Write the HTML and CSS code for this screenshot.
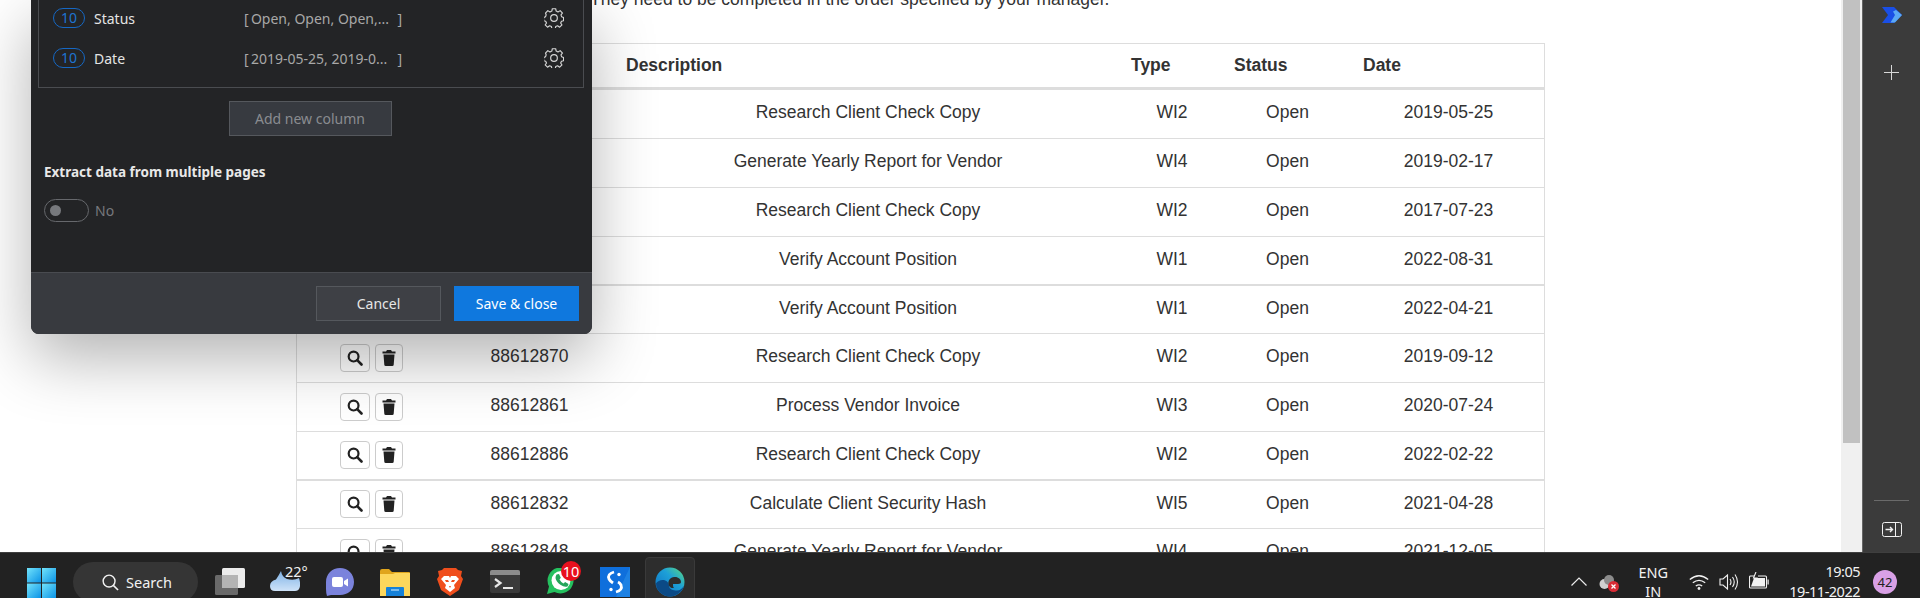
FILE: index.html
```html
<!DOCTYPE html>
<html lang="en">
<head>
<meta charset="utf-8">
<title>Work items</title>
<link rel="stylesheet" href="styles.css">
</head>
<body>
<svg class="defs" width="0" height="0" aria-hidden="true">
  <symbol id="gear" viewBox="0 0 24 24"><path fill="none" stroke="currentColor" stroke-width="1.400" stroke-linejoin="round" d="M10 1.500h4l.6 3 2.200 1 2.600-1.600 2.800 3-1.800 2.400.7 2.200 2.400 1v4l-2.500.6-1 2.200 1.600 2.500-2.800 2.800-2.500-1.700-2.200.9-.6 2.700h-4l-.6-2.700-2.200-.9-2.500 1.700-2.800-2.800 1.600-2.500-1-2.200-2.500-.6v-4l2.400-1 .7-2.200L1.800 6.900l2.800-3 2.600 1.600 2.200-1z" transform="translate(0 -.6) scale(1 .96)"/><circle cx="12" cy="12" r="4" fill="none" stroke="currentColor" stroke-width="1.400"/></symbol>
  <symbol id="search" viewBox="0 0 16 16"><circle cx="6.600" cy="6.600" r="4.900" fill="none" stroke="currentColor" stroke-width="2.200"/><path d="M10.200 10.200l4.300 4.300" stroke="currentColor" stroke-width="2.600" stroke-linecap="round"/></symbol>
  <symbol id="trash" viewBox="0 0 14 16"><path fill="currentColor" d="M5 0h4l1 1.500h3.500V3.500H.5V1.500H4zM1.500 4.500h11l-.8 10.200q-.1 1.300-1.400 1.300H3.700q-1.300 0-1.400-1.300z"/></symbol>
</svg>

<div class="screen">
  <div class="desktop">
    <main class="page">
      <p class="intro">They need to be completed in the order specified by your manager.</p>
      <table class="items">
        <thead>
          <tr><th class="c-act"></th><th class="c-id"></th><th class="c-desc">Description</th><th class="c-type">Type</th><th class="c-status">Status</th><th class="c-date">Date</th></tr>
        </thead>
        <tbody>
          <tr><td></td><td></td><td>Research Client Check Copy</td><td>WI2</td><td>Open</td><td>2019-05-25</td></tr>
          <tr><td></td><td></td><td>Generate Yearly Report for Vendor</td><td>WI4</td><td>Open</td><td>2019-02-17</td></tr>
          <tr><td></td><td></td><td>Research Client Check Copy</td><td>WI2</td><td>Open</td><td>2017-07-23</td></tr>
          <tr class="thick"><td></td><td></td><td>Verify Account Position</td><td>WI1</td><td>Open</td><td>2022-08-31</td></tr>
          <tr class="short"><td></td><td></td><td>Verify Account Position</td><td>WI1</td><td>Open</td><td>2022-04-21</td></tr>
          <tr><td><span class="tools"><button class="tool"><svg><use href="#search"/></svg></button><button class="tool"><svg class="bin"><use href="#trash"/></svg></button></span></td><td>88612870</td><td>Research Client Check Copy</td><td>WI2</td><td>Open</td><td>2019-09-12</td></tr>
          <tr><td><span class="tools"><button class="tool"><svg><use href="#search"/></svg></button><button class="tool"><svg class="bin"><use href="#trash"/></svg></button></span></td><td>88612861</td><td>Process Vendor Invoice</td><td>WI3</td><td>Open</td><td>2020-07-24</td></tr>
          <tr class="thick"><td><span class="tools"><button class="tool"><svg><use href="#search"/></svg></button><button class="tool"><svg class="bin"><use href="#trash"/></svg></button></span></td><td>88612886</td><td>Research Client Check Copy</td><td>WI2</td><td>Open</td><td>2022-02-22</td></tr>
          <tr class="short"><td><span class="tools"><button class="tool"><svg><use href="#search"/></svg></button><button class="tool"><svg class="bin"><use href="#trash"/></svg></button></span></td><td>88612832</td><td>Calculate Client Security Hash</td><td>WI5</td><td>Open</td><td>2021-04-28</td></tr>
          <tr><td><span class="tools"><button class="tool"><svg><use href="#search"/></svg></button><button class="tool"><svg class="bin"><use href="#trash"/></svg></button></span></td><td>88612848</td><td>Generate Yearly Report for Vendor</td><td>WI4</td><td>Open</td><td>2021-12-05</td></tr>
        </tbody>
      </table>
    </main>
    <div class="scrollbar"><div class="thumb"></div></div>
    <aside class="rail">
      <svg class="rail-logo" viewBox="0 0 20 16"><path fill="#1a4fe6" d="M0 0h12l8 8-8 8H0l6-8z"/><path fill="#5aa8f5" d="M8.500 15.500 13 8l-2-3.500L14 3l6 5-7 7.500z"/></svg>
      <svg class="rail-plus" viewBox="0 0 15 15"><path d="M7.500 0v15M0 7.500h15" stroke="#d8d8d8" stroke-width="1"/></svg>
      <div class="rail-spacer"></div>
      <div class="rail-rule"></div>
      <svg class="rail-collapse" viewBox="0 0 20 15"><rect x=".5" y=".5" width="19" height="14" rx="2" fill="none" stroke="#f2f2f2"/><path d="M13.500 0v15" stroke="#f2f2f2"/><path d="M3.500 7.500h7M8 5l2.500 2.500L8 10" fill="none" stroke="#f2f2f2" stroke-width="1.400"/></svg>
    </aside>

    <section class="dialog">
      <div class="dialog-body">
        <div class="columns">
          <div class="col-row"><span class="count">10</span><span class="col-name">Status</span><span class="col-val"><span>[&#8201;Open, Open, Open,...</span><span>]</span></span><svg class="gear"><use href="#gear"/></svg></div>
          <div class="col-row"><span class="count">10</span><span class="col-name">Date</span><span class="col-val"><span>[&#8201;2019-05-25, 2019-0...</span><span>]</span></span><svg class="gear"><use href="#gear"/></svg></div>
        </div>
        <div class="add-wrap"><button class="add">Add new column</button></div>
        <h3 class="extract">Extract data from multiple pages</h3>
        <div class="toggle-row"><span class="toggle"><span class="knob"></span></span><span class="toggle-label">No</span></div>
      </div>
      <footer class="dialog-foot">
        <button class="btn">Cancel</button>
        <button class="btn primary">Save &amp; close</button>
      </footer>
    </section>
  </div>

  <footer class="taskbar">
    <div class="task-left">
      <svg class="i-start" viewBox="0 0 29 30"><defs><linearGradient id="w" x1="0" y1="0" x2="1" y2="1"><stop offset="0" stop-color="#72e3fb"/><stop offset="1" stop-color="#0b93e6"/></linearGradient></defs><rect x="0" y="0" width="14" height="14.500" fill="url(#w)"/><rect x="15" y="0" width="14" height="14.500" fill="url(#w)"/><rect x="0" y="15.500" width="14" height="14.500" fill="url(#w)"/><rect x="15" y="15.500" width="14" height="14.500" fill="url(#w)"/></svg>
      <div class="search"><svg viewBox="0 0 18 18"><circle cx="7.500" cy="7.500" r="6.300" fill="none" stroke="#f2f2f2" stroke-width="1.500"/><path d="M12 12l5 5" stroke="#f2f2f2" stroke-width="1.700"/></svg><span>Search</span></div>
      <svg class="i-task" viewBox="0 0 30 27"><rect x="7" y="0" width="23" height="20" rx="1.500" fill="#ececec"/><rect x="0" y="7" width="23" height="20" rx="1.500" fill="#6a6a6a"/><rect x="7" y="7" width="16" height="13" fill="#b4b4b4"/></svg>
      <div class="weather"><svg viewBox="0 0 30 20"><defs><linearGradient id="c" x1="0" y1="0" x2="0" y2="1"><stop offset="0" stop-color="#7fb2e6"/><stop offset="1" stop-color="#cfe3f8"/></linearGradient></defs><path fill="url(#c)" d="M0 15q0-5 6-6.500Q9 4 11 0q1 6 6 8 7 2 12-1 2 6 .5 10-1 3-4.500 3H5q-5 0-5-5z"/></svg><span>22°</span></div>
      <svg class="i-team" viewBox="0 0 29 28"><path fill="#7b83dc" d="M15 0c8 0 14 6 14 14s-6 13-14 13H6l-4 1q-1-3-1-7v-7C1 6 7 0 15 0z"/><rect x="7" y="9" width="11" height="10" rx="2" fill="#fff"/><path fill="#fff" d="M19 13l4-2.500v8L19 16z"/></svg>
      <svg class="i-folder" viewBox="0 0 30 27"><path fill="#e0a51c" d="M0 2q0-2 2-2h7l3 3h17q1 0 1 1v23H0z"/><path fill="#fdd75c" d="M0 5h13l2-1h15v23H0z"/><path fill="#1681d8" d="M6 19q0-1 1-1h16q1 0 1 1v8H6z"/><path d="M11 21h8" stroke="#bfe1fa" stroke-width="1.200"/></svg>
      <svg class="i-brave" viewBox="0 0 26 28"><path fill="#f04e1c" d="M7 0h12l2 2 4 1-1 5 2 3-4 11-9 6-9-6L0 11l2-3-1-5 4-1z"/><path fill="#fff" d="M7 8h5l1 2 1-2h5l3 3-5 6 1 3-5 4-5-4 1-3-5-6z"/><path fill="#f04e1c" d="M8 12h3l1 2H9zM15 12h3l-1 2h-3zM12 18h2l-1 2z"/></svg>
      <svg class="i-term" viewBox="0 0 30 23"><rect width="30" height="23" rx="2" fill="#3a3a3a"/><path d="M0 5V2q0-2 2-2h26q2 0 2 2v3z" fill="#8c8c8c"/><path d="M5 9l5.500 4L5 17" fill="none" stroke="#e8e8e8" stroke-width="2.200"/><path d="M13 18h10" stroke="#e8e8e8" stroke-width="2"/></svg>
      <div class="wa"><svg viewBox="0 0 28 26"><path fill="#25c15f" d="M0 26l2-7.500A13 13 0 1 1 7.500 24z"/><circle cx="14" cy="12.500" r="9.500" fill="#fff"/><path fill="#25a55a" d="M9.500 6.500 12 6l1.800 3.800-1.300 1.700q1.500 2.800 4 4l1.600-1.400 3.400 2-.8 2.200q-3 1.500-7.300-1.500T8.500 10q0-2 1-3.500z"/></svg><span class="wa-badge">10</span></div>
      <svg class="i-blue" viewBox="0 0 30 30"><rect width="30" height="30" fill="#0f6fdc"/><path d="M30 0v30H16z" fill="#2b93ea" opacity=".5"/><path d="M14 5Q7 7 9 12q1 2 4 4M16 25q7-2 5-7-1-2-3-3" fill="none" stroke="#fff" stroke-width="2.800"/><circle cx="19" cy="7.500" r="1.700" fill="#fff"/><circle cx="11" cy="22.500" r="1.700" fill="#fff"/></svg>
      <div class="edge-tile"><svg viewBox="0 0 30 30"><defs><linearGradient id="e1" x1="0" y1="1" x2="1" y2="0"><stop offset="0" stop-color="#0b6cc0"/><stop offset=".6" stop-color="#1da0d8"/><stop offset="1" stop-color="#5bdc7d"/></linearGradient></defs><circle cx="15" cy="15" r="14.500" fill="url(#e1)"/><path fill="#0b4a86" d="M29 19c-2 6-8 10.500-14 10.500-7 0-14-6-14-13 3-5 12-5 13 2 0 4 4 5 8 5 3 0 5-2 7-4.500z"/><path fill="#2d2d2d" d="M15 20c-3-3-2-9 4-10 4-.5 7 2 7 5 0 1-1 2-3 2h-5c0 2 0 3 1 4-2 0-3 0-4-1z"/></svg></div>
    </div>
    <div class="task-right">
      <svg class="chev" viewBox="0 0 16 9"><path d="M.5 8.500 8 1l7.500 7.500" fill="none" stroke="#ececec" stroke-width="1.200"/></svg>
      <svg class="cloud" viewBox="0 0 20 17"><circle cx="5.500" cy="9" r="5" fill="#d0d0d0"/><circle cx="10" cy="5" r="5" fill="#8c8c8c"/><circle cx="14.500" cy="11.500" r="5.500" fill="#d92b35"/><path d="M12.500 9.500l4 4M16.500 9.500l-4 4" stroke="#fff" stroke-width="1.300"/></svg>
      <div class="lang"><span>ENG</span><span>IN</span></div>
      <svg class="wifi" viewBox="0 0 20 16"><path d="M.8 5.500q9.200-7.500 18.400 0M3.800 8.800q6.200-5 12.400 0M6.800 12q3.200-2.300 6.400 0" fill="none" stroke="#f2f2f2" stroke-width="1.300"/><circle cx="10" cy="14.500" r="1.400" fill="#f2f2f2"/></svg>
      <svg class="vol" viewBox="0 0 20 18"><path d="M1 6h3L8.500 2v14L4 12H1z" fill="none" stroke="#f2f2f2" stroke-width="1.100"/><path d="M11 6q2 3 0 6M13.500 4q3.500 5 0 10M16 1.500q5 7.500 0 15" fill="none" stroke="#f2f2f2" stroke-width="1.100"/></svg>
      <svg class="batt" viewBox="0 0 20 17"><path d="M5 4H1.500Q.5 4 .5 5v10q0 1 1 1h15q1 0 1-1V5q0-1-1-1H9" fill="none" stroke="#f2f2f2" stroke-width="1.100"/><path d="M18.500 7.500h1.200v5h-1.200z" fill="#f2f2f2"/><path d="M2 14.500 5 6h11v8.500z" fill="#f2f2f2"/><path d="M7 0 4.500 6H8l-2.500 5" fill="none" stroke="#f2f2f2" stroke-width="1.100"/></svg>
      <div class="clock"><span>19:05</span><span>19-11-2022</span></div>
      <span class="notif">42</span>
    </div>
  </footer>
</div>
</body>
</html>
```

FILE: styles.css
```css
* { box-sizing: border-box; }
html, body { margin: 0; height: 100%; overflow: hidden; }
body { font-family: "Liberation Sans", Arial, sans-serif; color: #333; background: #fff; }
.defs { position: absolute; }
button { font-family: inherit; }

.screen { display: flex; flex-direction: column; height: 598px; width: 1920px; }
.desktop { position: relative; display: flex; height: 552px; overflow: hidden; }

.page { flex: 1; min-width: 0; padding-left: 296px; overflow: hidden; }
.intro { margin: -11px 0 0; height: 54px; padding-left: 294px; font-size: 17.500px; line-height: 20px; white-space: nowrap; color: #333; }
.items { width: 1249px; table-layout: fixed; border-collapse: separate; border-spacing: 0; font-size: 17.500px; border-left: 1px solid #ddd; border-right: 1px solid #ddd; }
.items th { height: 47px; text-align: left; padding: 0 12px; font-weight: 700; border-top: 1px solid #ddd; border-bottom: 3px solid #ddd; }
.items th.c-type { padding-left: 9px; }
.items td { height: 49px; text-align: center; padding: 0 12px 3px; border-bottom: 1px solid #ddd; }
.items td:first-child { padding-bottom: 1px; }
.items td:nth-child(2) { padding-right: 13px; }
.items td:nth-child(5), .items td:nth-child(6) { padding-left: 14px; }
.items tr.thick td { border-bottom-width: 2px; }
.items tr.short td { height: 48px; }
.c-act { width: 149px; }
.c-id { width: 168px; }
.c-desc { width: 508px; }
.c-type { width: 100px; }
.c-status { width: 129px; }
.c-date { width: 193px; }

.tools { display: inline-flex; gap: 5px; vertical-align: middle; }
.tool { width: 30px; height: 28px; padding: 0; display: inline-flex; align-items: center; justify-content: center; background: #fff; border: 1px solid #ccc; border-radius: 4px; color: #222; }
.tool:last-child { width: 28px; }
.tool svg { width: 16px; height: 16px; }
.tool svg.bin { width: 14px; }

.scrollbar { width: 21px; background: #f0f0f0; padding: 0 2px; }
.thumb { width: 17px; height: 443px; background: #c1c1c1; }

.rail { width: 58px; background: #3b3b3b; border-left: 1px solid #666; display: flex; flex-direction: column; align-items: center; padding-top: 7px; }
.rail-logo { width: 20px; height: 16px; flex: none; }
.rail-plus { width: 15px; height: 15px; margin-top: 42px; flex: none; }
.rail-spacer { flex: 1; }
.rail-rule { width: 35px; height: 1px; background: #6a6a6a; }
.rail-collapse { width: 20px; height: 15px; margin: 21px 0 15px; flex: none; }

.dialog { position: absolute; left: 31px; bottom: 218px; width: 561px; background: #232426; border-radius: 0 0 8px 8px; box-shadow: 0 24px 64px rgba(0, 0, 0, .3); color: #e6e6e6; font-size: 14px; font-family: "Noto Sans", "Open Sans", sans-serif; }
.dialog-body { padding: 0 8px 0 7px; height: 272px; }
.columns { display: flex; flex-direction: column; border: 1px solid #4a4c50; border-top: 0; height: 88px; padding-left: 14px; }
.col-row { display: flex; align-items: center; height: 40px; flex: none; }
.col-row:first-child { margin-top: -2px; }
.count { width: 32px; height: 20px; border: 1px solid #1668c4; border-radius: 10px; color: #1e74d0; font-size: 14px; line-height: 18px; text-align: center; margin-right: 9px; flex: none; }
.col-name { width: 150px; color: #e4e4e4; }
.col-val { width: 158px; display: flex; justify-content: space-between; color: #a8a8a8; white-space: nowrap; }
.gear { width: 20px; height: 20px; margin-left: auto; margin-right: 19px; color: #d6d6d6; }

.add-wrap { display: flex; justify-content: center; margin-top: 13px; padding-right: 2px; }
.add { width: 163px; height: 35px; background: #373a40; border: 1px solid #55585d; color: #8a8c90; font-size: 14px; }
.extract { margin: 26px 0 0 6px; font-size: 13.500px; line-height: 20px; font-weight: 700; color: #e8e8e8; }
.toggle-row { display: flex; align-items: center; gap: 6px; margin: 17px 0 0 6px; }
.toggle { width: 45px; height: 23px; border: 1px solid #66686c; border-radius: 12px; padding: 5px 0 0 5px; }
.knob { display: block; width: 11px; height: 11px; border-radius: 50%; background: #77797d; }
.toggle-label { color: #77797d; font-size: 14px; }

.dialog-foot { height: 62px; background: #383a3f; border-top: 1px solid #494b50; border-radius: 0 0 8px 8px; display: flex; justify-content: flex-end; gap: 13px; padding: 13px 13px 0 0; }
.btn { width: 125px; height: 35px; background: #3e4045; border: 1px solid #55585d; color: #e6e6e6; font-size: 14px; }
.btn.primary { background: #0f78de; border-color: #0f78de; color: #fff; }

.taskbar { height: 46px; background: #222; border-top: 1px solid #3f3f3f; display: flex; justify-content: space-between; color: #f2f2f2; overflow: hidden; font-family: "Noto Sans", sans-serif; }
.task-left { display: flex; align-items: flex-start; padding-left: 27px; }
.task-left > * { flex: none; }
.i-start { width: 29px; height: 30px; margin-top: 15px; }
.search { width: 125px; height: 40px; margin: 9px 0 0 17px; background: #353535; border-radius: 20px; display: flex; align-items: center; gap: 7px; padding-left: 29px; font-size: 14.500px; }
.search svg { width: 17px; height: 17px; flex: none; }
.i-task { width: 30px; height: 27px; margin: 15px 0 0 17px; }
.weather { position: relative; width: 36px; height: 38px; margin: 12px 0 0 25px; }
.weather svg { position: absolute; left: 0; top: 6px; width: 30px; height: 20px; }
.weather span { position: absolute; left: 15px; top: -4px; font-size: 14.500px; line-height: 20px; }
.i-team { width: 29px; height: 28px; margin: 15px 0 0 19px; }
.i-folder { width: 30px; height: 27px; margin: 16px 0 0 26px; }
.i-brave { width: 26px; height: 28px; margin: 15px 0 0 27px; }
.i-term { width: 30px; height: 23px; margin: 17px 0 0 27px; }
.wa { position: relative; width: 34px; height: 40px; margin: 8px 0 0 27px; }
.wa svg { position: absolute; left: 0; top: 7px; width: 28px; height: 26px; }
.wa-badge { position: absolute; left: 14px; top: 0; width: 20px; height: 20px; border-radius: 50%; background: #e8101e; color: #fff; font-size: 14.500px; line-height: 20px; text-align: center; }
.i-blue { width: 30px; height: 30px; margin: 14px 0 0 19px; }
.edge-tile { width: 50px; height: 50px; margin: 4px 0 0 15px; background: #2d2d2d; border: 1px solid #3a3a3a; border-radius: 4px; display: flex; justify-content: center; padding-top: 9px; }
.edge-tile svg { width: 30px; height: 30px; }

.task-right { display: flex; align-items: flex-start; padding-right: 23px; font-size: 14.500px; }
.task-right > * { flex: none; }
.chev { width: 16px; height: 9px; margin-top: 24px; }
.cloud { width: 20px; height: 17px; margin: 22px 0 0 12px; }
.lang { display: flex; flex-direction: column; align-items: center; margin-left: 19px; width: 30px; line-height: 19px; padding-top: 10px; }
.wifi { width: 20px; height: 16px; margin: 21px 0 0 21px; }
.vol { width: 20px; height: 18px; margin: 20px 0 0 10px; }
.batt { width: 20px; height: 17px; margin: 19px 0 0 10px; }
.clock { display: flex; flex-direction: column; align-items: flex-end; margin-left: 20px; line-height: 20px; padding-top: 8px; letter-spacing: -.5px; }
.notif { width: 24px; height: 24px; border-radius: 50%; background: #d9a0e6; color: #222; font-size: 13px; line-height: 24px; text-align: center; margin: 17px 0 0 13px; }
```
